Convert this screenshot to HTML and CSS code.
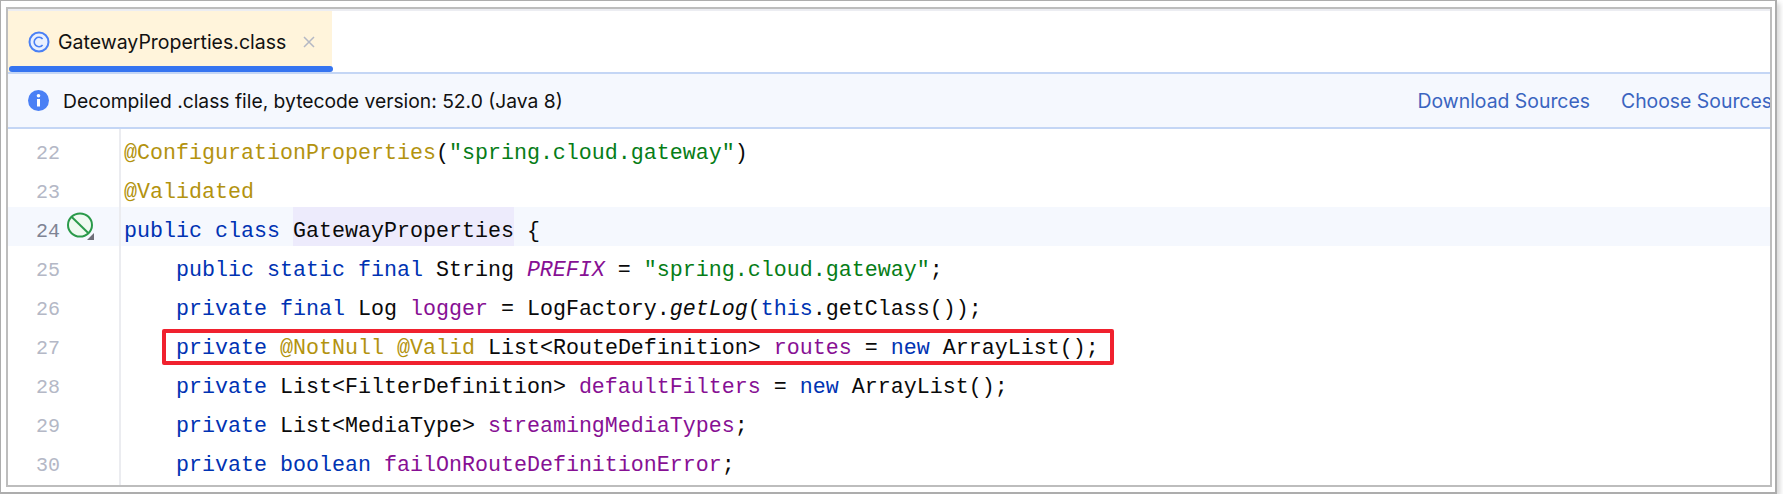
FILE: index.html
```html
<!DOCTYPE html>
<html lang="en">
<head>
<meta charset="utf-8">
<title>GatewayProperties.class</title>
<link rel="stylesheet" href="styles.css">
</head>
<body>
<div class="frame">
  <div class="window">
    <div class="tabbar">
      <div class="tab">
        <svg class="class-icon" width="22" height="22" viewBox="0 0 22 22"><circle cx="11" cy="11" r="9.5" fill="#e9f0fe" stroke="#4a80f5" stroke-width="2"/><path d="M14.6 8.1A4.7 4.7 0 1 0 14.6 13.9" fill="none" stroke="#4a80f5" stroke-width="1.6"/></svg>
        <span class="tab-name">GatewayProperties.class</span>
        <svg class="tab-close" width="12" height="12" viewBox="0 0 12 12"><path d="M1 1L11 11M11 1L1 11" stroke="#b4b8c4" stroke-width="1.5"/></svg>
      </div>
    </div>
    <div class="banner">
      <svg class="info-icon" width="21" height="21" viewBox="0 0 21 21"><circle cx="10.5" cy="10.5" r="10.5" fill="#4a80f5"/><rect x="9" y="9" width="3" height="7.5" fill="#fff"/><circle cx="10.5" cy="5.8" r="1.8" fill="#fff"/></svg>
      <span class="banner-text">Decompiled .class file, bytecode version: 52.0 (Java 8)</span>
      <span class="links"><a class="link">Download Sources</a><a class="link">Choose Sources</a></span>
    </div>
    <div class="code">
      <div class="row"><span class="num">22</span><span class="mark"></span><span class="src"><span class="an">@ConfigurationProperties</span>(<span class="st">"spring.cloud.gateway"</span>)</span></div>
      <div class="row"><span class="num">23</span><span class="mark"></span><span class="src"><span class="an">@Validated</span></span></div>
      <div class="row current"><span class="num">24</span><span class="mark"><svg width="28" height="28" viewBox="0 0 28 28"><ellipse cx="14" cy="13" rx="12" ry="11.6" fill="#effaf1" stroke="#2a9a4a" stroke-width="2"/><path d="M5.5 4.8L22.5 21.2" stroke="#2a9a4a" stroke-width="2"/><path d="M28 21V28H21Z" fill="#6e6e78"/></svg></span><span class="src"><span class="kw">public class</span> <span class="hl">GatewayProperties</span> {</span></div>
      <div class="row"><span class="num">25</span><span class="mark"></span><span class="src">    <span class="kw">public static final</span> String <span class="cn">PREFIX</span> = <span class="st">"spring.cloud.gateway"</span>;</span></div>
      <div class="row"><span class="num">26</span><span class="mark"></span><span class="src">    <span class="kw">private final</span> Log <span class="fd">logger</span> = LogFactory.<i>getLog</i>(<span class="kw">this</span>.getClass());</span></div>
      <div class="row"><span class="num">27</span><span class="mark"></span><span class="src">    <span class="kw">private</span> <span class="an">@NotNull @Valid</span> List&lt;RouteDefinition&gt; <span class="fd">routes</span> = <span class="kw">new</span> ArrayList();</span><span class="redbox"></span></div>
      <div class="row"><span class="num">28</span><span class="mark"></span><span class="src">    <span class="kw">private</span> List&lt;FilterDefinition&gt; <span class="fd">defaultFilters</span> = <span class="kw">new</span> ArrayList();</span></div>
      <div class="row"><span class="num">29</span><span class="mark"></span><span class="src">    <span class="kw">private</span> List&lt;MediaType&gt; <span class="fd">streamingMediaTypes</span>;</span></div>
      <div class="row"><span class="num">30</span><span class="mark"></span><span class="src">    <span class="kw">private boolean</span> <span class="fd">failOnRouteDefinitionError</span>;</span></div>
      <div class="tail"><span class="tail-gutter"></span></div>
    </div>
  </div>
</div>
</body>
</html>
```
FILE: styles.css
```css
* { box-sizing: border-box; }
html, body { margin: 0; padding: 0; background: #fff; overflow: hidden; }
.frame {
  width: 1777px;
  height: 494px;
  border: 2px solid #adadad;
  border-left-width: 1px;
  border-top-width: 1px;
  padding: 6px 3px 5px 5px;
  box-shadow: 3px 3px 5px #d8d8d8;
  background: #fff;
}
.window {
  height: 100%;
  border: 2px solid #bdbdbd;
  background: #fff;
  overflow: hidden;
  display: flex;
  flex-direction: column;
  font-family: Inter, "Liberation Sans", sans-serif;
}
.tabbar {
  height: 63px;
  flex: none;
  padding-top: 2px;
  background: linear-gradient(#ecedf2 2px, #fff 2px);
}
.tab {
  width: 324px;
  height: 61px;
  background: #fff4db;
  display: flex;
  align-items: center;
  padding: 0 0 0 20px;
  position: relative;
}
.tab::after {
  content: "";
  position: absolute;
  left: 1px;
  top: 55px;
  width: 324px;
  height: 6px;
  background: #3574f0;
  border-radius: 3px;
}
.class-icon { margin-right: 8px; flex: none; }
.tab-name { font-size: 19.5px; color: #111; white-space: nowrap; }
.tab-close { margin-left: 17px; flex: none; }
.banner {
  height: 57px;
  flex: none;
  background: #f5f8fe;
  border-top: 2px solid #c4d6f5;
  border-bottom: 2px solid #c4d6f5;
  display: flex;
  align-items: center;
  padding-left: 20px;
  white-space: nowrap;
}
.info-icon { flex: none; margin-right: 14px; }
.banner-text { font-size: 19.27px; color: #111; }
.links { margin-left: auto; margin-right: -2px; display: flex; gap: 31px; }
.link { font-size: 19.4px; color: #3a64c0; }
.code {
  flex: 1;
  display: flex;
  flex-direction: column;
  font-family: "Liberation Mono", monospace;
  font-size: 21.67px;
  color: #0a0a0a;
}
.row {
  display: flex;
  flex: none;
  height: 39px;
  align-items: center;
  position: relative;
  white-space: pre;
  line-height: 39px;
}
.current { background: #f5f8fe; }
.num {
  width: 50px;
  padding-left: 28px;
  font-size: 20px;
  color: #b4b8c6;
  position: relative;
  top: 5px;
  flex: none;
}
.current .num { color: #7f8494; }
.mark {
  width: 63px;
  flex: none;
  height: 100%;
  border-right: 2px solid #ebecf0;
  display: flex;
  align-items: center;
  padding-left: 8px;
}
.mark svg { margin-top: -2px; flex: none; }
.src { padding-left: 3px; position: relative; top: 5px; }
.tail { flex: 1; }
.tail-gutter {
  display: block;
  width: 113px;
  height: 100%;
  border-right: 2px solid #ebecf0;
}
.kw { color: #0033b3; }
.an { color: #b3930f; }
.st { color: #067d17; }
.fd { color: #871094; }
.cn { color: #871094; font-style: italic; }
.hl { background: #edebfc; padding: 12px 0 2px; }
.redbox {
  position: absolute;
  left: 154px;
  top: 5px;
  width: 952px;
  height: 36px;
  border: 4px solid #f0212e;
  border-radius: 2px;
}
```
